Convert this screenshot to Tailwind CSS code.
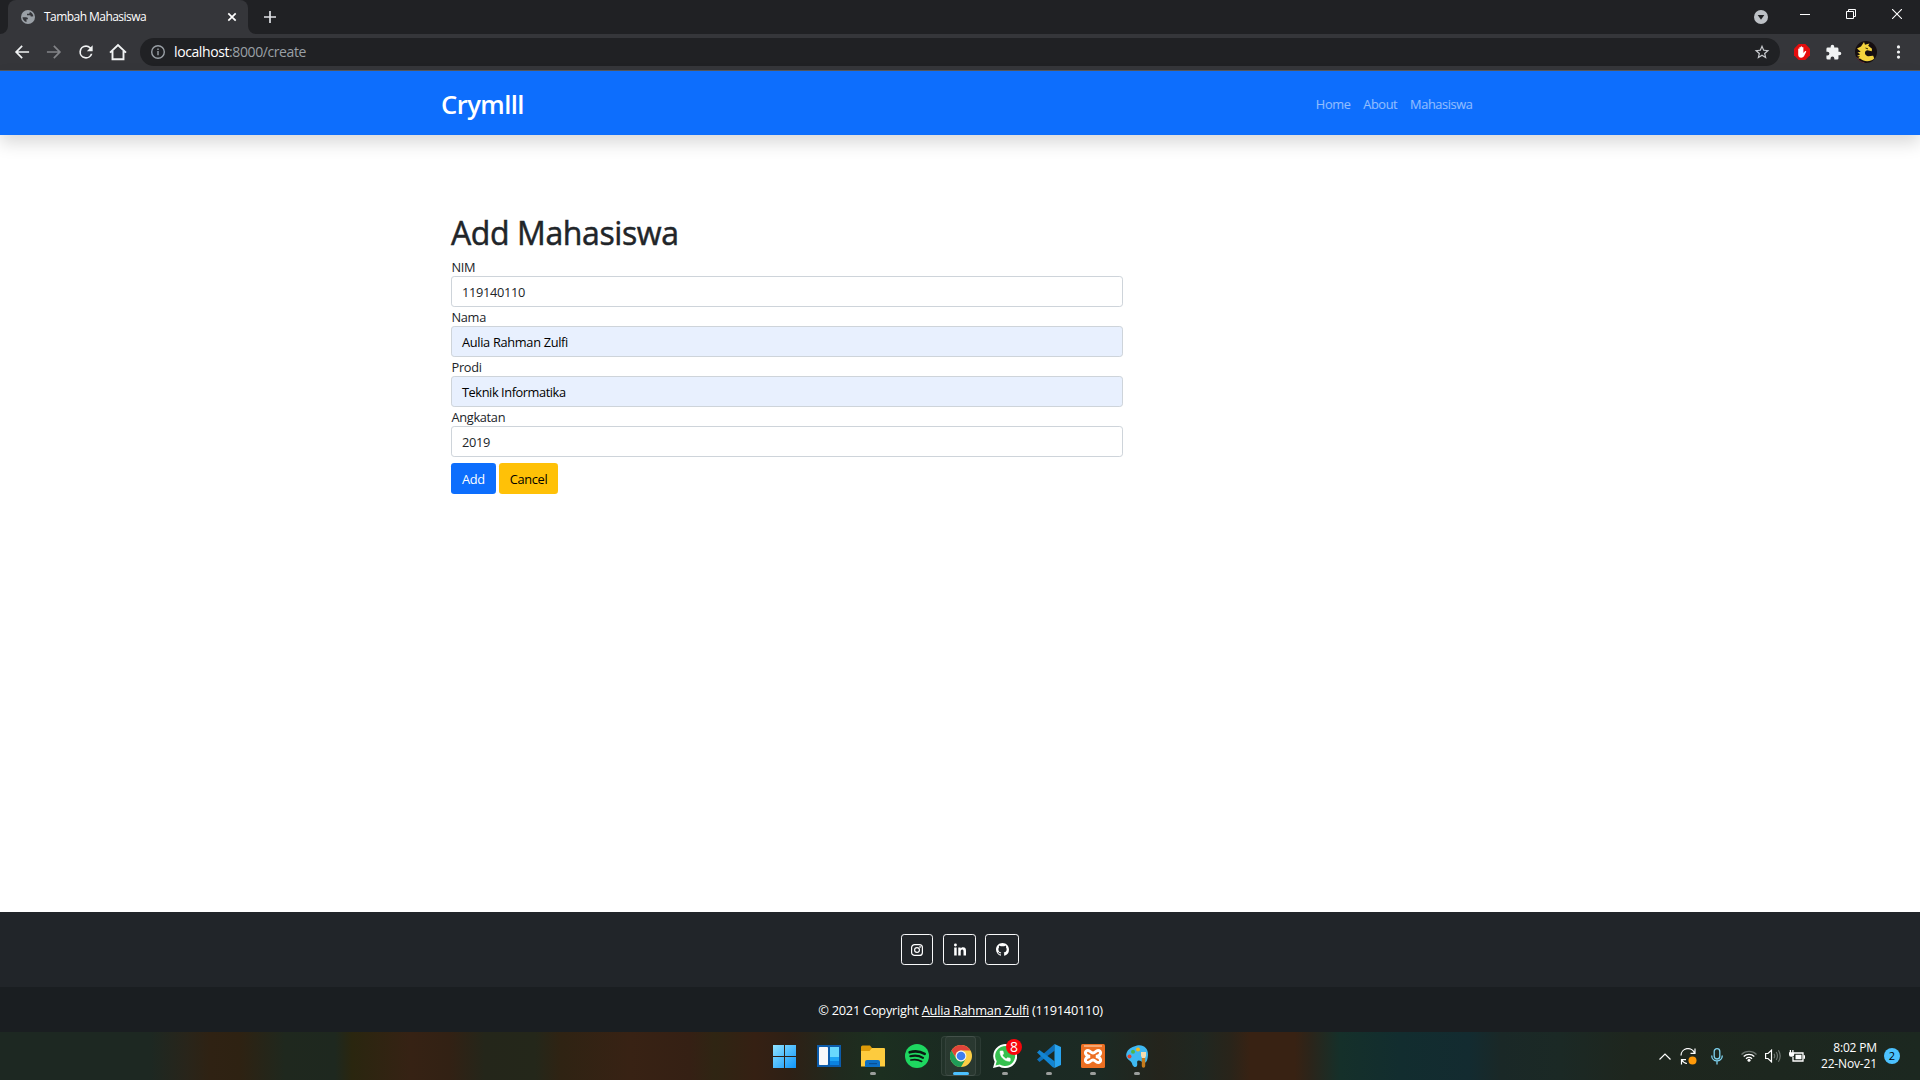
<!DOCTYPE html>
<html lang="id">
<head>
<meta charset="utf-8">
<title>Tambah Mahasiswa</title>
<script src="https://cdn.jsdelivr.net/npm/@tailwindcss/browser@4"></script>
</head>
<body class="flex h-screen w-screen flex-col overflow-hidden bg-white font-['Open_Sans','Noto_Sans',sans-serif] text-[12.8px] leading-[19.2px] text-[#212529]">

<!-- Tab strip -->
<div class="flex h-[34px] shrink-0 items-stretch bg-[#202124] text-white">
  <div class="relative ml-2 flex w-[240px] items-center rounded-t-lg bg-[#35363a] pr-[9px] pb-px pl-[13px]">
    <svg class="absolute bottom-0 -left-2 size-2" viewBox="0 0 8 8"><path d="M8 0v8H0a8 8 0 0 0 8-8z" fill="#35363a"/></svg>
    <svg class="absolute -right-2 bottom-0 size-2" viewBox="0 0 8 8"><path d="M0 0v8h8a8 8 0 0 1-8-8z" fill="#35363a"/></svg>
    <svg class="size-[14px]" viewBox="0 0 14 14"><circle cx="7" cy="7" r="7" fill="#9aa0a6"/><path d="M1.500 7.300H5c1.700 0 2 .8 2 1.900H5.500v2.900C3.300 11.600 1.700 9.700 1.500 7.300z" fill="#35363a"/><path d="M8.700 1.700v.8c0 .8-.6 1.300-1.400 1.300H6v1.500h2.700c.8 0 1 .5 1 1.300.9 0 1.800-.300 2.700-.300C12 4 10.700 2.300 8.700 1.700z" fill="#35363a"/></svg>
    <span class="ml-[9px] text-[12px] tracking-[-0.55px] whitespace-nowrap">Tambah Mahasiswa</span>
    <svg class="ml-auto size-[14px]" viewBox="0 0 14 14" stroke="#fff" stroke-width="1.700"><path d="M3.300 3.300l7.400 7.400M10.700 3.300l-7.400 7.400"/></svg>
  </div>
  <svg class="mt-[11px] ml-[16px] size-3" viewBox="0 0 12 12" stroke="#dfe1e5" stroke-width="1.700"><path d="M6 0v12M0 6h12"/></svg>
  <svg class="mt-[10px] mr-[32px] ml-auto size-[14px]" viewBox="0 0 14 14"><circle cx="7" cy="7" r="7" fill="#bdc1c6"/><path d="M3.700 5h6.600L7 9.800z" fill="#202124"/></svg>
  <svg class="mt-[9px] mr-9 size-[10px]" viewBox="0 0 10 10" stroke="#fff"><path d="M0 5.500h10"/></svg>
  <svg class="mt-[9px] mr-9 size-[10px]" viewBox="0 0 10 10" fill="none" stroke="#fff"><path d="M.5 2.500h7v7h-7zM2.500 2.500v-2h7v7h-2"/></svg>
  <svg class="mt-[9px] mr-[18px] size-[10px]" viewBox="0 0 10 10" stroke="#fff" stroke-width="1.100"><path d="M0 0l10 10M10 0L0 10"/></svg>
</div>

<!-- Toolbar -->
<div class="flex h-[37px] shrink-0 items-center border-b border-[#55575b] bg-[#35363a] pl-3">
  <div class="flex gap-3">
    <svg class="size-5" viewBox="0 0 24 24" fill="#f1f3f4"><path d="M20.500 11H7.300l5.600-5.600L11.500 4l-8 8 8 8 1.400-1.400L7.300 13h13.200z"/></svg>
    <svg class="size-5" viewBox="0 0 24 24" fill="#838488"><path d="M3.500 11h13.200l-5.600-5.600L12.500 4l8 8-8 8-1.400-1.400 5.600-5.600H3.500z"/></svg>
    <svg class="size-5" viewBox="0 0 24 24" fill="#f1f3f4"><path d="M17.650 6.350A7.960 7.960 0 0 0 12 4a8 8 0 1 0 7.730 10h-2.080A6 6 0 1 1 12 6c1.660 0 3.140.69 4.220 1.780L13 11h7V4z"/></svg>
    <svg class="size-5" viewBox="0 0 20 20" fill="none" stroke="#f1f3f4" stroke-width="1.900"><path d="M2 10.600L10 3l8 7.600M4.500 9v8.200h11V9"/></svg>
  </div>
  <div class="ml-3 flex h-7 w-[1640px] items-center rounded-full bg-[#202124] pr-[10px] pl-[11px]">
    <svg class="size-[14px]" viewBox="0 0 14 14" fill="none" stroke="#9aa0a6" stroke-width="1.400"><circle cx="7" cy="7" r="6.300"/><path d="M7 6v4.300M7 3.500v1.500"/></svg>
    <span class="ml-[9px] text-[14px] tracking-[-0.4px] whitespace-nowrap text-[#9aa0a6]"><span class="text-white">localhost</span>:8000/create</span>
    <svg class="ml-auto size-4" viewBox="0 0 24 24" fill="#c9cbcf"><path d="M23 9.240l-7.900-.68L12 1.300 8.900 8.570 1 9.240l6 5.200-1.800 7.700L12 18.050l6.800 4.100-1.790-7.710zM12 15.900l-4.100 2.500 1.080-4.700-3.640-3.150 4.800-.42L12 5.700l1.880 4.430 4.800.42-3.640 3.150 1.090 4.700z"/></svg>
  </div>
  <svg class="ml-[14px] size-4" viewBox="0 0 16 16"><path d="M4.700 0h6.600L16 4.700v6.600L11.300 16H4.700L0 11.300V4.700z" fill="#e40d0d"/><path d="M4.200 8.500V5.200c0-.9 1.200-.9 1.200 0V3.600c0-.9 1.300-.9 1.300 0v-.7c0-1 1.400-1 1.400 0v.7c0-.9 1.300-.9 1.300 0V9l1.300-1.600c.8-.9 1.900-.3 1.400.7l-2 4c-.7 1.300-1.700 1.700-2.900 1.700-2.200 0-3-1.700-3-3.300z" fill="#fff"/></svg>
  <svg class="ml-[15px] size-[17px]" viewBox="0 0 24 24" fill="#f1f3f4"><path d="M20.500 11H19V7a2 2 0 0 0-2-2h-4V3.500a2.500 2.500 0 0 0-5 0V5H4a2 2 0 0 0-2 2v3.800h1.500a2.700 2.700 0 0 1 0 5.400H2V20a2 2 0 0 0 2 2h3.800v-1.500a2.700 2.700 0 0 1 5.400 0V22H17a2 2 0 0 0 2-2v-4h1.500a2.500 2.500 0 0 0 0-5z"/></svg>
  <svg class="ml-[13px] size-[22px]" viewBox="0 0 22 22"><circle cx="11" cy="11" r="11" fill="#150e10"/><path d="M1.500 16a11 11 0 0 0 8 5.800" fill="none" stroke="#5e2d38"/><path d="M2 7.500L6 5.500 9 1l1 2.800 4.500-1.300-1.300 2.200 3.800 3-.2 2.500-4.300-1c-3 .3-3.600 4.300-.3 5.700 2 .8 4.500-.6 6-.100l1 2.700c-3.500 3.500-10.400 3.500-13.700.2L3 17.200l2-1.700-3-.5 3.200-1.700-2.700-1.800 3.200-.7z" fill="#f3d33d"/><path d="M10.500 7l2.500.9" stroke="#3b2c08"/></svg>
  <svg class="ml-[15px] size-[14px]" viewBox="0 0 14 14" fill="#f1f3f4"><circle cx="6.500" cy="1.900" r="1.600"/><circle cx="6.500" cy="7" r="1.600"/><circle cx="6.500" cy="12.100" r="1.600"/></svg>
</div>

<!-- Page header -->
<nav class="flex h-16 shrink-0 items-center justify-between bg-[#0d6efd] pr-[447.500px] pl-[441px] shadow-[0_8px_16px_rgba(0,0,0,0.15)]">
  <a class="pt-1 text-[25.6px] leading-9 font-semibold tracking-[-0.55px] text-white">Crymlll</a>
  <div class="mt-1 flex gap-[12.8px] tracking-[-0.4px] text-white/55">
    <a>Home</a><a>About</a><a>Mahasiswa</a>
  </div>
</nav>

<!-- Form -->
<main class="grow pt-[79px] pl-[451px]">
  <h1 class="mb-[5.400px] text-[32px] leading-[38.4px] tracking-[-0.4px] [-webkit-text-stroke:0.5px_#212529]">Add Mahasiswa</h1>
  <form class="w-[672px] tracking-[-0.32px]">
    <label class="block pl-[0.5px]">NIM</label>
    <div class="-mt-px mb-px rounded-[3.2px] border border-[#ced4da] px-[10px] pt-[5.8px] pb-[3.8px]">119140110</div>
    <label class="block pl-[0.5px]">Nama</label>
    <div class="-mt-px mb-px rounded-[3.2px] border border-[#ced4da] bg-[#e8f0fe] px-[10px] pt-[5.8px] pb-[3.8px] text-black">Aulia Rahman Zulfi</div>
    <label class="block pl-[0.5px]">Prodi</label>
    <div class="-mt-px mb-px rounded-[3.2px] border border-[#ced4da] bg-[#e8f0fe] px-[10px] pt-[5.8px] pb-[3.8px] tracking-[-0.43px] text-black">Teknik Informatika</div>
    <label class="block pl-[0.5px]">Angkatan</label>
    <div class="-mt-px mb-px rounded-[3.2px] border border-[#ced4da] px-[10px] pt-[5.8px] pb-[3.8px]">2019</div>
    <div class="mt-[6px] flex gap-[3px]">
      <div class="flex h-[31px] w-[45px] items-center justify-center rounded-[3.2px] bg-[#0d6efd] pt-[2px] text-white">Add</div>
      <div class="flex h-[31px] w-[59px] items-center justify-center rounded-[3.2px] bg-[#ffc107] pt-[2px] text-black">Cancel</div>
    </div>
  </form>
</main>

<!-- Page footer -->
<footer class="shrink-0 text-white">
  <div class="flex h-[75px] justify-center bg-[#212529] pt-[22px]">
    <div class="mr-[10px] flex h-[31px] w-8 items-center justify-center rounded-[3.2px] border border-[#f8f9fa]">
      <svg class="size-3" viewBox="0 0 12 12" fill="none" stroke="#fff" stroke-width="1.200"><rect x=".6" y=".6" width="10.800" height="10.800" rx="3"/><circle cx="6" cy="6" r="2.400"/><circle cx="9.100" cy="2.900" r=".3"/></svg>
    </div>
    <div class="mr-[9px] flex h-[31px] w-[33px] items-center justify-center rounded-[3.2px] border border-[#f8f9fa]">
      <svg class="mb-px h-[13px] w-[12px]" viewBox="0 0 448 448" fill="#fff"><path d="M100.280 448H7.400V148.900h92.880zM53.790 108.100C24.090 108.100 0 83.500 0 53.800a53.790 53.790 0 0 1 107.580 0c0 29.700-24.100 54.300-53.790 54.300zM447.900 448h-92.680V302.400c0-34.700-.7-79.200-48.290-79.200-48.290 0-55.690 37.700-55.690 76.700V448h-92.780V148.900h89.080v40.800h1.300c12.400-23.500 42.690-48.300 87.880-48.300 94 0 111.280 61.900 111.280 142.300V448z"/></svg>
    </div>
    <div class="flex h-[31px] w-[34px] items-center justify-center rounded-[3.2px] border border-[#f8f9fa]">
      <svg class="size-[13px]" viewBox="0 0 16 16" fill="#fff"><path d="M8 0C3.580 0 0 3.580 0 8c0 3.540 2.290 6.530 5.470 7.590.4.070.55-.17.55-.38 0-.19-.01-.82-.01-1.490-2.010.37-2.530-.49-2.690-.94-.09-.23-.48-.94-.82-1.130-.28-.15-.68-.52-.01-.53.63-.01 1.080.58 1.230.82.72 1.210 1.870.87 2.330.66.070-.52.28-.87.51-1.070-1.780-.2-3.640-.89-3.640-3.950 0-.87.31-1.590.82-2.150-.08-.2-.36-1.020.08-2.120 0 0 .67-.21 2.200.82.64-.18 1.320-.27 2-.27s1.360.09 2 .27c1.530-1.040 2.200-.82 2.200-.82.44 1.100.16 1.920.08 2.120.51.56.82 1.270.82 2.150 0 3.070-1.870 3.750-3.650 3.950.29.25.54.73.54 1.480 0 1.070-.01 1.930-.01 2.200 0 .21.15.46.55.38A8.010 8.010 0 0 0 16 8c0-4.420-3.580-8-8-8z"/></svg>
    </div>
  </div>
  <div class="flex h-[45px] items-center justify-center bg-[#1a1e21] pt-[2px]"><span class="pl-px tracking-[-0.25px] whitespace-nowrap">© 2021 Copyright <a class="underline">Aulia Rahman Zulfi</a> (119140110)</span></div>
</footer>

<!-- Taskbar -->
<div class="flex h-12 shrink-0 items-stretch bg-[linear-gradient(90deg,#1d2822_0px,#1d2822_150px,#28251b_185px,#2f2213_210px,#2e2212_240px,#1f281e_285px,#1e281f_335px,#2a260f_352px,#362214_410px,#322114_450px,#24261a_485px,#24271a_535px,#2f2313_560px,#382214_630px,#352014_690px,#2f2513_715px,#352013_755px,#2e2015_790px,#202a1e_840px,#1c2f20_880px,#1a2a22_960px,#1c2a24_1100px,#24241c_1160px,#1f2721_1200px,#29241a_1230px,#382213_1250px,#382213_1295px,#2a251b_1312px,#15302a_1340px,#122d2f_1400px,#132b30_1470px,#1a2827_1500px,#1b2925_1560px,#1e261e_1630px,#1c2820_1920px)] pl-[763px] text-white">
  <div class="flex w-11 justify-center pt-[13px] pr-px">
    <svg class="h-[23px] w-[23px]" viewBox="0 0 23 23"><defs><linearGradient id="win" x1="0" y1="0" x2="23" y2="23" gradientUnits="userSpaceOnUse"><stop stop-color="#8fe3ff"/><stop offset="1" stop-color="#0f95fb"/></linearGradient></defs><path d="M0 0h11v11H0zM12 0h11v11H12zM0 12h11v11H0zM12 12h11v11H12z" fill="url(#win)"/></svg>
  </div>
  <div class="flex w-11 justify-center pt-[13px]">
    <svg class="h-[22px] w-6" viewBox="0 0 24 22"><path d="M0 0h24v22H0z" fill="#0c5cab"/><rect x="2" y="2" width="9" height="18" rx=".8" fill="#f7f8fa"/><path d="M13 2h9v10h-9z" fill="#69d8fd"/><path d="M13 12h9v4h-9z" fill="#1ea5f5"/><path d="M13 16h9v4h-9z" fill="#0b82e0"/></svg>
  </div>
  <div class="flex w-11 flex-col items-center pt-[13px]">
    <svg class="h-[23px] w-6" viewBox="0 0 24 23"><path d="M0 2a1.500 1.500 0 0 1 1.500-1.500H9L11 3v4H0z" fill="#dd9b08"/><path d="M0 6h8.500L11 3h12q1 0 1 1v17.500H0z" fill="#fdcb3e"/><path d="M4 22v-5a2 2 0 0 1 2-2h11a2 2 0 0 1 2 2v5z" fill="#0c6fc4"/><path d="M8 18h8v1.200H8z" fill="#0a4f93"/></svg>
    <div class="mt-1 h-[3px] w-[6px] rounded-full bg-[#9b9e9c]"></div>
  </div>
  <div class="flex w-11 justify-center pt-3">
    <svg class="size-6" viewBox="0 0 24 24"><circle cx="12" cy="12" r="12" fill="#1ed760"/><g fill="none" stroke="#0b1a12" stroke-linecap="round"><path d="M4.700 8.300c5-1.500 10.600-.9 15 1.500" stroke-width="2.600"/><path d="M5.300 12.300c4.300-1.200 8.900-.7 12.700 1.500" stroke-width="2.100"/><path d="M5.900 16c3.800-.9 7.500-.5 10.800 1.400" stroke-width="1.700"/></g></svg>
  </div>
  <div class="relative flex w-11 flex-col items-center pt-[13px]">
    <div class="absolute top-1 left-[6px] h-10 w-[36px] rounded-[4px] border border-white/5 bg-white/3"></div>
    <div class="absolute top-1 left-[2px] h-10 w-[35px] rounded-[4px] border border-white/8 bg-white/4"></div>
    <svg class="relative size-[22px]" viewBox="0 0 22 22"><circle cx="11" cy="11" r="11" fill="#fccd45"/><path d="M1.470 5.500A11 11 0 0 1 20.530 5.500H11A5.500 5.500 0 0 0 6.240 13.750z" fill="#e0443a"/><path d="M1.470 5.500A11 11 0 0 0 11 22L15.760 13.750A5.500 5.500 0 0 1 6.240 13.750z" fill="#1f9d58"/><circle cx="11" cy="11" r="5.400" fill="#f4f6f8"/><circle cx="11" cy="11" r="4.300" fill="#3f7df0"/></svg>
    <div class="relative mt-[5px] h-[3px] w-4 rounded-full bg-[#4cc2ff]"></div>
  </div>
  <div class="relative flex w-11 flex-col items-center pt-3">
    <svg class="size-6" viewBox="0 0 24 24"><path d="M0 24l1.700-6.200A12 12 0 1 1 6.200 22.400z" fill="#fff"/><path d="M2.500 21.500l1.200-4.200A10 10 0 1 1 6.800 20.400z" fill="#36c04f"/><path transform="translate(5.300 5.300) scale(.57)" d="M20 15.400c-1.200 0-2.400-.2-3.500-.6-.4-.1-.7 0-1 .3L13.900 17c-2.800-1.300-5.500-3.900-6.900-6.800l2-1.700c.2-.3.300-.7.200-1C8.800 6.400 8.600 5.200 8.600 4c0-.5-.4-1-1-1H4.200C3.600 3 3 3.200 3 4c0 9.300 7.700 17 17 17 .7 0 1-.6 1-1.200v-3.400c0-.6-.4-1-1-1z" fill="#fff" stroke="#fff"/></svg>
    <div class="absolute top-[7px] left-[23px] flex size-4 items-center justify-center rounded-full bg-[#f8060c] text-[14px] leading-4">8</div>
    <div class="mt-1 h-[3px] w-[6px] rounded-full bg-[#9b9e9c]"></div>
  </div>
  <div class="flex w-11 flex-col items-center pt-3">
    <svg class="size-6" viewBox="0 0 24 24"><path d="M17.500 0L0 15.500 2.500 18 17.500 6.800z" fill="#0e70bb"/><path d="M0 8.500L2.500 6 17.500 17.200V24L15.500 23z" fill="#1285d3"/><path d="M17.500 0L24 3v18l-6.500 3z" fill="#28a4f0"/></svg>
    <div class="mt-1 h-[3px] w-[6px] rounded-full bg-[#9b9e9c]"></div>
  </div>
  <div class="flex w-11 flex-col items-center pt-3">
    <svg class="size-6" viewBox="0 0 24 24"><rect width="24" height="24" rx="1.500" fill="#ec6f22"/><path d="M3 2h18" stroke="#f9b98c" stroke-width="1.500"/><path d="M9 12.500C3 11.500 3.500 6.500 7 6.500c2.500 0 2.500 2.500 5 2.500s2.500-2.500 5-2.500c3.500 0 4 5-2 6 6 1 5.500 6 2 6-2.500 0-2.500-2.500-5-2.500s-2.500 2.500-5 2.500c-3.500 0-4-5 2-6z" fill="none" stroke="#fff" stroke-width="3"/></svg>
    <div class="mt-1 h-[3px] w-[6px] rounded-full bg-[#9b9e9c]"></div>
  </div>
  <div class="flex w-11 flex-col items-center pt-3">
    <svg class="size-6" viewBox="0 0 24 24"><path d="M12 1.500C18 0 23.500 4 23 11c-.3 4-1 7-3.500 8-2 .6-3-3-6-2.500-2.500.5-.5 3-1.500 5.500C11 24 8 23 7.300 20.500 7 18.500 6 17.500 4.500 16.500 1 14 .5 11 2 8c2-4 6-5.500 10-6.500z" fill="#3fb9f2"/><circle cx="4.500" cy="12.500" r="2" fill="#e0452f"/><circle cx="8" cy="7.800" r="2" fill="#4fb648"/><circle cx="13" cy="5.500" r="2" fill="#f6b81a"/><path d="M16 8h5v4l-1 2h-3l-1-2z" fill="#f2dcb0"/><path d="M16.800 14h3.400v8a1.700 1.700 0 0 1-3.400 0z" fill="#c57b1d"/></svg>
    <div class="mt-1 h-[3px] w-[6px] rounded-full bg-[#9b9e9c]"></div>
  </div>

  <!-- System tray -->
  <div class="ml-auto flex items-center pr-5">
    <svg class="h-[7px] w-3" viewBox="0 0 12 7" fill="none" stroke="#fff" stroke-width="1.200"><path d="M.5 6.500L6 1l5.500 5.500"/></svg>
    <svg class="ml-[9px] size-[17px]" viewBox="0 0 17 17" fill="none" stroke="#fff" stroke-width="1.200"><path d="M1 7.500A7 7 0 0 1 14.500 5M15 .500V5.300h-4.500M7 15.500A7 7 0 0 1 1.800 12M1.500 16.500v-4.800h4.500"/><circle cx="12.500" cy="12.500" r="4" fill="#ff9a0a" stroke="none"/></svg>
    <svg class="ml-[14px] h-[17px] w-3" viewBox="0 0 12 17" fill="none" stroke="#7fd3f0" stroke-width="1.300"><rect x="3.200" y=".7" width="5.600" height="10.300" rx="2.800"/><path d="M.7 7.500c0 7.200 10.600 7.200 10.600 0M6 13v3.500"/></svg>
    <svg class="ml-[18px] h-3 w-4" viewBox="0 0 16 12" fill="none" stroke-width="1.300"><path d="M.5 4.500a10.600 10.600 0 0 1 15 0" stroke="#6d7570"/><path d="M2.700 6.500a7.500 7.500 0 0 1 10.600 0M5 8.700a4.300 4.300 0 0 1 6 0" stroke="#fff"/><circle cx="8" cy="10.300" r="1.500" fill="#fff"/></svg>
    <svg class="ml-2 h-[14px] w-4" viewBox="0 0 16 14" fill="none" stroke-width="1.200"><path d="M.6 4.500H3L6.500 1.200v11.600L3 9.500H.6z" stroke="#fff"/><path d="M9 4.800q1.400 2.200 0 4.400M11.200 3q2.600 4 0 8M13.400 1.200q3.600 5.800 0 11.600" stroke="#6d7570"/></svg>
    <svg class="ml-[8px] h-3 w-4" viewBox="0 0 16 12"><path d="M5 3h9v8H4V7" fill="none" stroke="#fff" stroke-width="1.300"/><path d="M6.500 4.700h6v4.600h-6zM14.500 5.300H16v3.400h-1.500zM0 2.200h5.200v2.500a2 2 0 0 1-2 2H2a2 2 0 0 1-2-2zM.8 0H2v2.500H.8zM3.300 0h1.200v2.500H3.300z" fill="#fff"/></svg>
    <div class="ml-[16px] flex w-14 flex-col items-end text-[12px] leading-4 tracking-[-0.15px] whitespace-nowrap"><span>8:02 PM</span><span>22-Nov-21</span></div>
    <div class="ml-[7px] flex size-4 items-center justify-center rounded-full bg-[#4cc2ff] text-[11px] leading-4 text-black">2</div>
  </div>
</div>
</body>
</html>
